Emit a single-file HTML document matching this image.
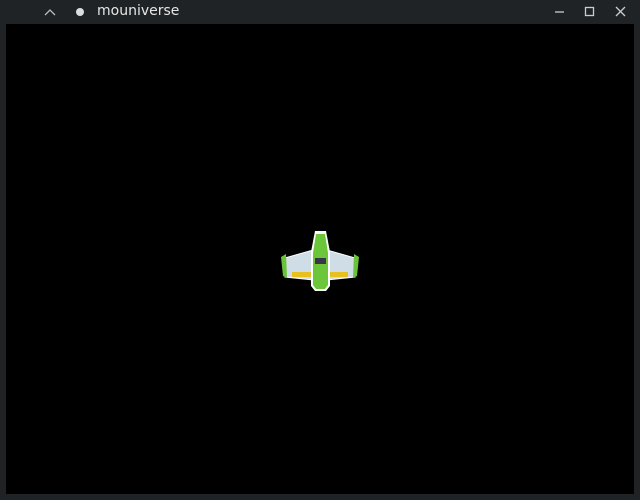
<!DOCTYPE html>
<html><head><style>
html,body{margin:0;padding:0;width:640px;height:500px;background:#202326;overflow:hidden;font-family:"Liberation Sans","DejaVu Sans",sans-serif}
.bar{position:absolute;left:0;top:0;width:640px;height:24px;background:#202326}
.title{position:absolute;left:97px;top:3px;color:#e6e6e6;font-size:14px;font-family:"DejaVu Sans",sans-serif}
.game{position:absolute;left:6px;top:24px;width:628px;height:470px;background:#000}
svg{position:absolute;left:0;top:0}
</style></head><body>
<div class="bar"></div>
<div class="title">mouniverse</div>
<div class="game"></div>
<svg width="640" height="500">
<polyline points="45,15 50,10 55,15" fill="none" stroke="#bbb" stroke-width="1.3"/>
<circle cx="80" cy="12" r="4" fill="#ddd"/>
<line x1="555" y1="12" x2="564" y2="12" stroke="#ccc" stroke-width="1.3"/>
<rect x="585.5" y="7.5" width="8" height="8" fill="none" stroke="#ccc" stroke-width="1.3"/>
<path d="M616 7 L625 16 M625 7 L616 16" stroke="#ccc" stroke-width="1.3"/>
<!-- ship -->
<path d="M285 258 L313 250 L313 280 L285 277 Z" fill="#cfdde6" stroke="#fff" stroke-width="1"/>
<path d="M355 258 L327 250 L327 280 L355 277 Z" fill="#cfdde6" stroke="#fff" stroke-width="1"/>
<rect x="292" y="272" width="20" height="5" fill="#e8c020"/>
<rect x="328" y="272" width="20" height="5" fill="#e8c020"/>
<path d="M281 257 L286 254 L287 278 L283 276 Z" fill="#6ac23a"/>
<path d="M359 257 L354 254 L353 278 L357 276 Z" fill="#6ac23a"/>
<path d="M315 231 L326 231 L330 252 L330 286 L326 291 L315 291 L311 286 L311 252 Z" fill="#fff"/>
<path d="M316 234 L325 234 L328 253 L328 285 L325 289 L316 289 L313 285 L313 253 Z" fill="#6cc63a"/>
<rect x="315" y="258" width="11" height="6" fill="#3a3548"/>
</svg>
</body></html>
